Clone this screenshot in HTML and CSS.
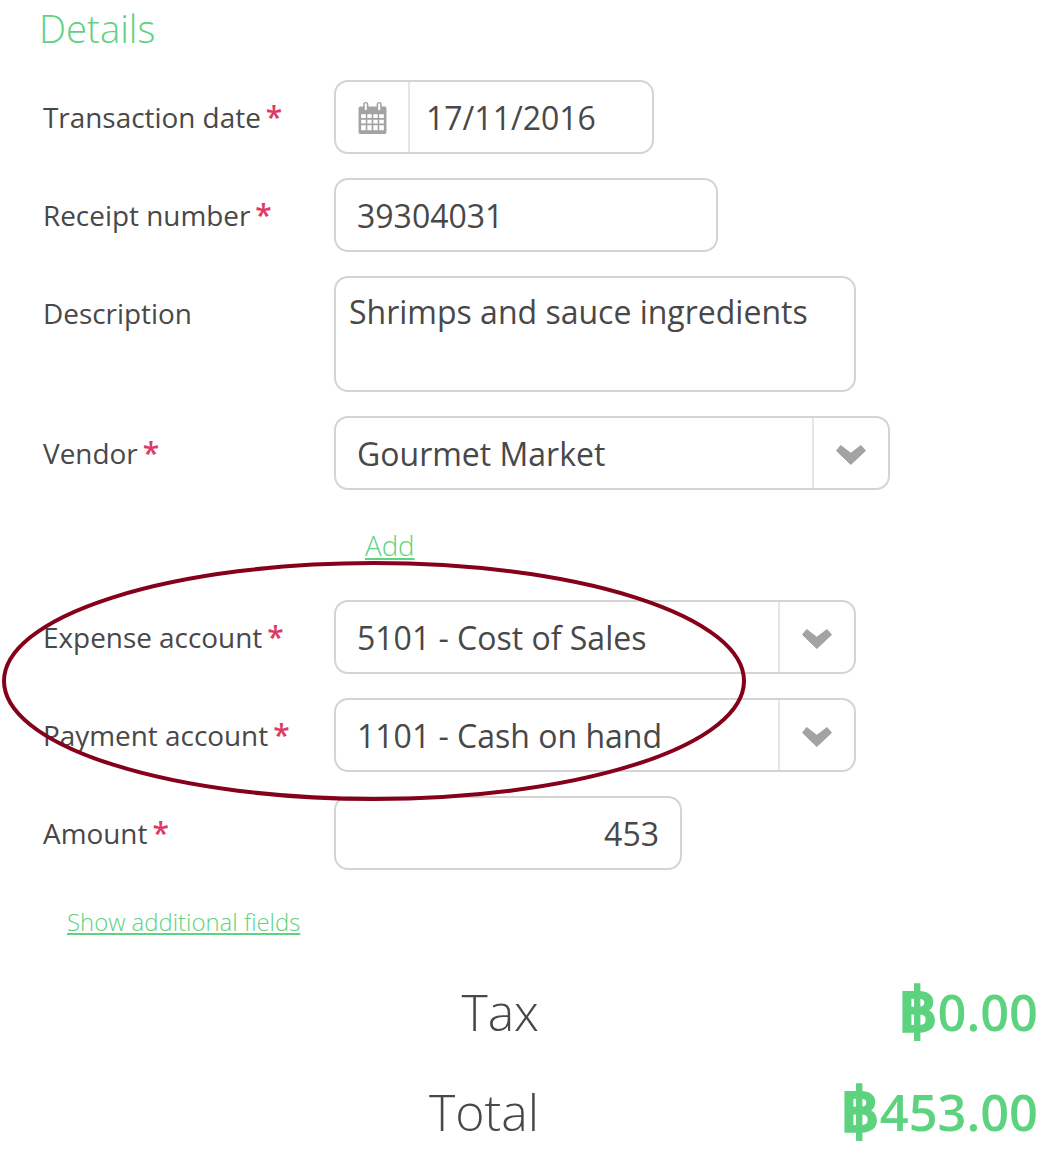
FILE: index.html
```html
<!DOCTYPE html>
<html lang="en">

<head>
    <meta charset="UTF-8">
    <title>Details</title>
    <link rel="stylesheet" href="styles.css">
</head>

<body>
    <div class="page">
        <h2>Details</h2>

        <div class="row">
            <label>Transaction date<span class="req">*</span></label>
            <div class="field date-field">
                <span class="addon addon-left">
                    <svg width="31" height="33" viewBox="0 0 30 30" preserveAspectRatio="none">
                        <path fill="#a3a3a3" fill-rule="evenodd" d="M3 5h3V3.500a2.500 2.500 0 0 1 5 0V5h8V3.500a2.500 2.500 0 0 1 5 0V5h3a1.500 1.500 0 0 1 1.500 1.500v22A1.500 1.500 0 0 1 27 30H3a1.500 1.500 0 0 1-1.500-1.500v-22A1.500 1.500 0 0 1 3 5zM7.500 3v4.500a1 1 0 0 0 2 0V3a1 1 0 0 0-2 0zm13 0v4.500a1 1 0 0 0 2 0V3a1 1 0 0 0-2 0zM4 12v3.500h4.500V12zm6 0v3.500h4.200V12zm5.800 0v3.500H20V12zm5.700 0v3.500H26V12zM4 17v3.500h4.500V17zm6 0v3.500h4.200V17zm5.800 0v3.500H20V17zm5.700 0v3.500H26V17zM4 22v4.500h4.500V22zm6 0v4.500h4.200V22zm5.800 0v4.500H20V22zm5.700 0v4.500H26V22z"/>
                    </svg>
                </span>
                <span class="value">17/11/2016</span>
            </div>
        </div>

        <div class="row">
            <label>Receipt number<span class="req">*</span></label>
            <div class="field receipt-field"><span class="value">39304031</span></div>
        </div>

        <div class="row">
            <label>Description</label>
            <div class="field desc-field">Shrimps and sauce ingredients</div>
        </div>

        <div class="row">
            <label>Vendor<span class="req">*</span></label>
            <div class="field vendor-field">
                <span class="value">Gourmet Market</span>
                <span class="addon addon-right">
                    <svg class="chevron" width="30" height="20" viewBox="0 0 30 20"><path d="M0.500 5.700L4.700 0.500L14.800 8.300L25 0.500L29.500 5.700L14.800 19.500z"/></svg>
                </span>
            </div>
        </div>

        <div class="add-row"><a href="#">Add</a></div>

        <div class="row">
            <label>Expense account<span class="req">*</span></label>
            <div class="field account-field">
                <span class="value">5101 - Cost of Sales</span>
                <span class="addon addon-right">
                    <svg class="chevron" width="30" height="20" viewBox="0 0 30 20"><path d="M0.500 5.700L4.700 0.500L14.800 8.300L25 0.500L29.500 5.700L14.800 19.500z"/></svg>
                </span>
            </div>
        </div>

        <div class="row">
            <label>Payment account<span class="req">*</span></label>
            <div class="field account-field">
                <span class="value">1101 - Cash on hand</span>
                <span class="addon addon-right">
                    <svg class="chevron" width="30" height="20" viewBox="0 0 30 20"><path d="M0.500 5.700L4.700 0.500L14.800 8.300L25 0.500L29.500 5.700L14.800 19.500z"/></svg>
                </span>
            </div>
        </div>

        <div class="row">
            <label>Amount<span class="req">*</span></label>
            <div class="field amount-field"><span class="value">453</span></div>
        </div>

        <div class="more-row"><a href="#">Show additional fields</a></div>

        <div class="total-row">
            <span class="total-label">Tax</span>
            <span class="total-value"><span class="baht">฿</span>0.00</span>
        </div>
        <div class="total-row">
            <span class="total-label">Total</span>
            <span class="total-value"><span class="baht">฿</span>453.00</span>
        </div>

        <!-- hand drawn circle on top of the screenshot -->
        <svg class="circle" width="760" height="250" viewBox="0 0 760 250">
            <ellipse cx="374" cy="121" rx="370" ry="118" fill="none" stroke="#85001b" stroke-width="4"/>
        </svg>
    </div>
</body>

</html>
```

FILE: styles.css
```css
body {
    font-family: 'Open Sans', 'Noto Sans', sans-serif;
    margin: 0;
    background-color: #ffffff;
    color: #484848;
}

.page {
    position: relative;
    width: 1050px;
    height: 1154px;
    overflow: hidden;
}

h2 {
    margin: 0;
    padding: 5px 0 0 39px;
    height: 80px;
    box-sizing: border-box;
    font-size: 38.3px;
    line-height: 46px;
    font-weight: 300;
    color: #5dd27f;
}

.row {
    display: flex;
    margin-bottom: 24px;
}

label {
    width: 291px;
    margin-left: 43px;
    font-size: 27.9px;
    line-height: 74px;
    flex-shrink: 0;
}

.req {
    margin-left: 5px;
    color: #dc3c63;
    font-size: 30px;
    font-weight: 600;
}

.field {
    display: flex;
    align-items: center;
    box-sizing: border-box;
    height: 74px;
    border: 2px solid #d4d4d4;
    border-radius: 14px;
    font-size: 32px;
}

.value {
    flex: 1;
    padding-left: 21px;
}

.date-field {
    width: 320px;
}

.date-field .value {
    padding-left: 16px;
}

.receipt-field {
    width: 384px;
}

.desc-field {
    width: 522px;
    height: 116px;
    align-items: flex-start;
    padding: 12px 0 0 13px;
    line-height: 44px;
}

.vendor-field {
    width: 556px;
}

.account-field {
    width: 522px;
}

.amount-field {
    width: 348px;
}

.amount-field .value {
    text-align: right;
    padding-right: 21px;
}

.addon {
    display: flex;
    align-items: center;
    justify-content: center;
    height: 100%;
    flex-shrink: 0;
}

.addon-left {
    width: 72px;
    border-right: 2px solid #e6e6e6;
}

.addon-right {
    width: 74px;
    border-left: 2px solid #e6e6e6;
}

.chevron {
    margin-top: 4px;
}

.chevron path {
    fill: #a3a3a3;
    stroke: #a3a3a3;
    stroke-width: 1;
    stroke-linejoin: round;
}

a {
    color: #5dd27f;
    font-weight: 300;
}

.add-row {
    height: 86px;
    padding: 13px 0 0 365px;
    box-sizing: border-box;
    font-size: 27.7px;
    line-height: 36px;
}

.more-row {
    height: 68px;
    padding: 10px 0 0 67px;
    box-sizing: border-box;
    font-size: 23.9px;
    line-height: 36px;
}

.total-row {
    display: flex;
    justify-content: space-between;
    height: 100px;
    align-items: center;
}

.total-label {
    width: 539px;
    text-align: right;
    font-size: 50px;
    font-weight: 300;
}

.total-value {
    padding-right: 12px;
    font-size: 50.5px;
    line-height: 60px;
    font-weight: 600;
    color: #5dd27f;
}

.baht {
    font-weight: 800;
    font-size: 60px;
    line-height: 0;
    letter-spacing: 1px;
    -webkit-text-stroke: 1.5px #5dd27f;
}

.circle {
    position: absolute;
    left: 0;
    top: 560px;
}
```
